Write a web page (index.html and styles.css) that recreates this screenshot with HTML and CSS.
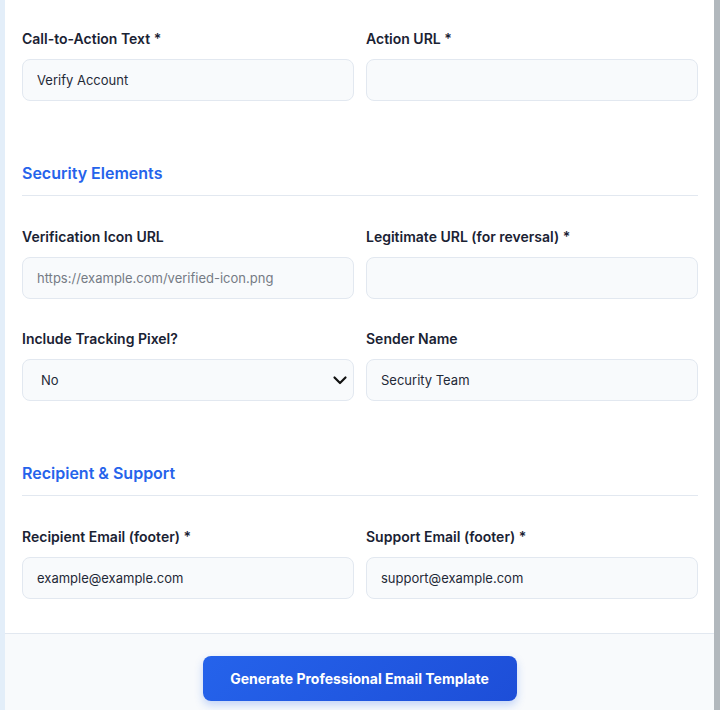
FILE: index.html
```html
<!DOCTYPE html>
<html lang="en">
<head>
<meta charset="utf-8">
<title>Email Template Form</title>
<link rel="stylesheet" href="styles.css">
</head>
<body>
<div class="page">
  <div class="card">
    <div class="body">
      <div class="grid">
        <div class="field">
          <label class="label">Call-to-Action Text *</label>
          <input class="input" type="text" value="Verify Account">
        </div>
        <div class="field">
          <label class="label">Action URL *</label>
          <input class="input" type="text" value="">
        </div>
      </div>

      <div class="section">
        <h3 class="section-title">Security Elements</h3>
        <div class="grid">
          <div class="field">
            <label class="label">Verification Icon URL</label>
            <input class="input" type="text" placeholder="https://example.com/verified-icon.png">
          </div>
          <div class="field">
            <label class="label">Legitimate URL (for reversal) *</label>
            <input class="input" type="text" value="">
          </div>
          <div class="field">
            <label class="label">Include Tracking Pixel?</label>
            <div class="select">
              <span class="select-value">No</span>
              <svg class="chevron" width="16" height="16" viewBox="0 0 16 16" fill="none" stroke="#111" stroke-width="2.2" stroke-linecap="round" stroke-linejoin="round"><path d="M2.5 5.5 L8 11 L13.5 5.5"/></svg>
            </div>
          </div>
          <div class="field">
            <label class="label">Sender Name</label>
            <input class="input" type="text" value="Security Team">
          </div>
        </div>
      </div>

      <div class="section">
        <h3 class="section-title">Recipient &amp; Support</h3>
        <div class="grid">
          <div class="field">
            <label class="label">Recipient Email (footer) *</label>
            <input class="input" type="text" value="example@example.com">
          </div>
          <div class="field">
            <label class="label">Support Email (footer) *</label>
            <input class="input" type="text" value="support@example.com">
          </div>
        </div>
      </div>
    </div>
    <div class="footer">
      <button class="btn" type="button">Generate Professional Email Template</button>
    </div>
  </div>
  <div class="scrollbar"></div>
</div>
</body>
</html>
```
FILE: styles.css
```css
* { box-sizing: border-box; }
html, body { margin: 0; padding: 0; }
body {
  background: #e3eef9;
  font-family: Inter, "Noto Sans", sans-serif;
  color: #1e293b;
  height: 710px;
  overflow: hidden;
}
.page {
  display: flex;
  height: 710px;
  padding-left: 5px;
}
.card {
  width: 709px;
  background: #ffffff;
  display: flex;
  flex-direction: column;
}
.scrollbar {
  width: 6px;
  background: #b2b8bd;
}
.body {
  padding: 28px 16px 34px 17px;
}
.grid {
  display: grid;
  grid-template-columns: 1fr 1fr;
  column-gap: 12px;
  row-gap: 29px;
}
.field {
  display: flex;
  flex-direction: column;
}
.label {
  font-size: 14px;
  font-weight: 600;
  line-height: 22px;
  color: #1a2233;
  margin-bottom: 9px;
}
.input, .select {
  height: 42px;
  border: 1px solid #e2e8f0;
  background: #f8fafc;
  border-radius: 8px;
  padding: 0 14px 1px;
  font-family: Inter, "Noto Sans", sans-serif;
  font-size: 13px;
  color: #1f2937;
  outline: none;
  width: 100%;
}
.input::placeholder { color: #757b85; }
.select {
  display: flex;
  align-items: center;
  justify-content: space-between;
  padding: 0 5px 1px 18px;
}
.section { margin-top: 60px; }
.section-title {
  margin: 0 0 30px;
  font-size: 16px;
  font-weight: 600;
  line-height: 24px;
  color: #2563eb;
  padding-bottom: 10px;
  border-bottom: 1px solid #e2e8f0;
}
.footer {
  flex: 1;
  background: #f8fafc;
  border-top: 1px solid #e2e8f0;
  display: flex;
  justify-content: center;
  padding-top: 22px;
}
.btn {
  width: 314px;
  height: 45px;
  border: none;
  border-radius: 8px;
  background: linear-gradient(135deg, #2563eb 0%, #1d4ed8 100%);
  color: #ffffff;
  font-family: Inter, "Noto Sans", sans-serif;
  font-size: 14px;
  font-weight: 700;
  box-shadow: 0 4px 8px rgba(37, 99, 235, 0.25);
}
```
